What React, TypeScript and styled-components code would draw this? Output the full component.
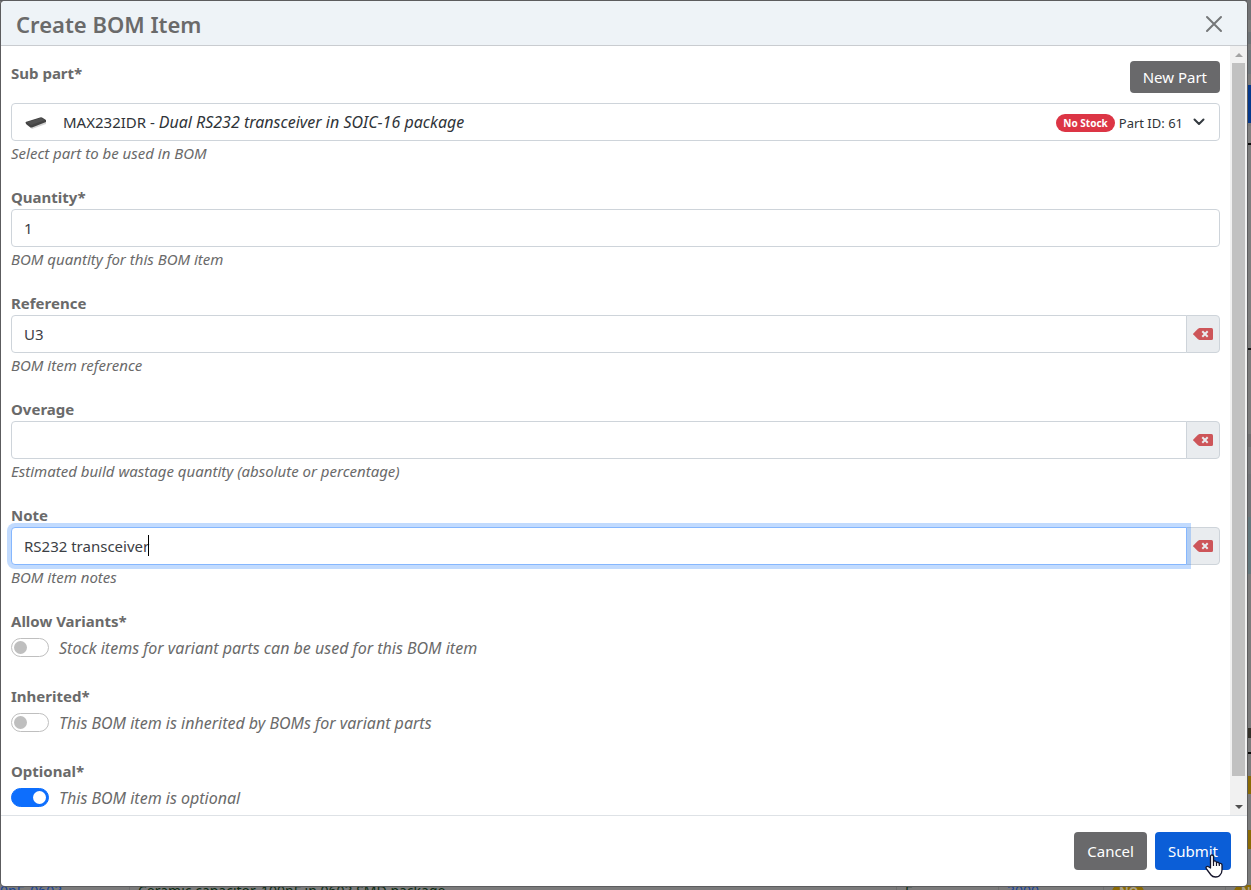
import React, { useState } from "react";
import styled, { createGlobalStyle } from "styled-components";

const GlobalStyle = createGlobalStyle`
  *, *::before, *::after { box-sizing: border-box; }
  body {
    margin: 0;
    font-family: "Noto Sans", "Open Sans", sans-serif;
    font-size: 15px;
    line-height: 24px;
    color: #6a6a6a;
  }
  input, button { font: inherit; }
`;

const Page = styled.div`
  position: relative;
  display: flex;
  flex-direction: column;
  height: 100vh;
  padding: 1px 4px 4px 1px;
  background: #7b7b7b;
  overflow: hidden;
`;

const SideStrip = styled.div`
  position: absolute;
  top: 0;
  right: 0;
  bottom: 0;
  width: 4px;
  display: flex;
  flex-direction: column;
`;

const Slice = styled.div<{ $h: number; $c: string }>`
  flex: 0 0 ${(p) => p.$h}px;
  background: ${(p) => p.$c};
`;

const TopStrip = styled.div`
  position: absolute;
  top: 0;
  left: 0;
  right: 0;
  height: 1px;
  background: #5b5b5e;
`;

const TableRow = styled.div`
  position: absolute;
  left: 0;
  right: 0;
  bottom: 0;
  height: 5px;
  display: flex;
  overflow: hidden;
  font-size: 14px;
  line-height: 12px;
  color: #0c2d12;
  white-space: nowrap;
`;

const Cell = styled.div<{ $w: number; $link?: boolean }>`
  flex: 0 0 ${(p) => p.$w}px;
  padding-left: 8px;
  border-left: 1px solid #6e6e6e;
  color: ${(p) => (p.$link ? "#15429a" : "inherit")};
`;

const LeadCell = styled(Cell)`
  padding-left: 0;
  border-left: 0;
`;

const Tag = styled.span`
  display: block;
  width: 32px;
  padding: 0 7px;
  border-radius: 8px;
  background: #8a6a05;
  color: #a8a08a;
  font-size: 12px;
  line-height: 14px;
  font-weight: 700;
`;

const Dialog = styled.form`
  position: relative;
  flex: 1;
  min-height: 0;
  display: flex;
  flex-direction: column;
  background: #fff;
  border-radius: 4px;
  box-shadow: 0 0 0 1px #5c5c5e;
  overflow: hidden;
`;

const Header = styled.header`
  display: flex;
  align-items: center;
  justify-content: space-between;
  height: 45px;
  padding: 2px 24px 0 15px;
  background: #eef3f7;
  border-bottom: 1px solid #c9ccd0;
`;

const Title = styled.h1`
  margin: 0;
  font-size: 22px;
  line-height: 32px;
  font-weight: 600;
`;

const CloseButton = styled.button`
  display: flex;
  padding: 0;
  border: 0;
  background: none;
  color: #757779;
`;

const Main = styled.div`
  flex: 1;
  min-height: 0;
  display: flex;
`;

const Body = styled.div`
  flex: 1;
  min-width: 0;
  display: flex;
  flex-direction: column;
  gap: 20px;
  padding: 15px 10px 0;
  overflow: auto;
  scrollbar-width: none;
`;

const Scrollbar = styled.div`
  flex: 0 0 17px;
  display: flex;
  flex-direction: column;
  align-items: center;
  background: #f1f1f1;
`;

const ScrollArrow = styled.div`
  height: 17px;
  display: flex;
  align-items: center;
`;

const Thumb = styled.div`
  width: 13px;
  height: 97%;
  background: #c1c1c1;
`;

const Track = styled.div`
  flex: 1;
  min-height: 0;
`;

const Field = styled.div`
  display: flex;
  flex-direction: column;
  flex-shrink: 0;
`;

const FieldHead = styled.div`
  display: flex;
  justify-content: space-between;
  align-items: flex-start;
  margin-bottom: 10px;
`;

const Label = styled.label`
  font-weight: 700;
`;

const Hint = styled.div`
  font-style: italic;
`;

const Group = styled.div`
  position: relative;
  display: flex;
  height: 38px;
`;

const TextInput = styled.input<{ $joined?: boolean; $active?: boolean }>`
  flex: 1;
  min-width: 0;
  padding: 6px 12px;
  border: 1px solid ${(p) => (p.$active ? "#86b7fe" : "#ced4da")};
  border-radius: ${(p) => (p.$joined ? "4px 0 0 4px" : "4px")};
  background: #fff;
  color: #3c4045;
  outline: none;
  position: relative;
  z-index: ${(p) => (p.$active ? 1 : 0)};
  box-shadow: ${(p) => (p.$active ? "0 0 0 4px rgba(13, 110, 253, 0.25)" : "none")};
`;

const Caret = styled.span`
  position: absolute;
  z-index: 2;
  left: 137px;
  top: 8px;
  width: 1px;
  height: 21px;
  background: #000;
`;

const ClearButton = styled.button`
  flex: 0 0 34px;
  display: flex;
  align-items: center;
  justify-content: center;
  margin-left: -1px;
  padding: 0;
  border: 1px solid #ced4da;
  border-radius: 0 4px 4px 0;
  background: #e9ecef;
`;

const PartSelect = styled.button`
  display: flex;
  align-items: center;
  height: 38px;
  padding: 0 14px 0 12px;
  border: 1px solid #ced4da;
  border-radius: 4px;
  background: #fff;
  color: #303439;
  text-align: left;
`;

const PartName = styled.span`
  flex: 1;
  padding-left: 15px;

  i { font-size: 16px; }
`;

const Stock = styled.span`
  display: flex;
  align-items: center;
  padding-top: 2px;
`;

const Badge = styled.span`
  padding: 0 7px;
  border-radius: 9px;
  background: #dc3545;
  color: #fff;
  font-size: 10px;
  line-height: 18px;
  font-weight: 700;
`;

const PartId = styled.span`
  padding: 0 10px 0 4px;
  font-size: 13px;
  line-height: 18px;
`;

const SwitchRow = styled.div`
  display: flex;
  align-items: flex-start;
  gap: 10px;
  font-size: 16px;
  line-height: 31px;
  font-style: italic;
`;

const Switch = styled.input`
  appearance: none;
  width: 38px;
  height: 19px;
  margin: 5px 0 0;
  padding: 2px;
  border: 1px solid #bfbfbf;
  border-radius: 10px;
  background: #fff;
  display: flex;
  &::before {
    content: "";
    width: 13px;
    height: 13px;
    border-radius: 50%;
    background: #bfbfbf;
  }
  &:checked {
    justify-content: flex-end;
    background: #0d6efd;
    border-color: #0d6efd;
  }
  &:checked::before { background: #fff; }
`;

const Footer = styled.footer`
  display: flex;
  justify-content: flex-end;
  gap: 8px;
  padding: 16px;
  border-top: 1px solid #dee2e6;
`;

const Button = styled.button<{ $tone?: "primary"; $small?: boolean }>`
  height: ${(p) => (p.$small ? 32 : 38)}px;
  padding: 0 13px;
  border: 0;
  border-radius: 4px;
  background: ${(p) => (p.$tone ? "#0b5ed7" : "#69696b")};
  color: #fff;
`;

const Pointer = styled.svg`
  position: absolute;
  right: 24px;
  bottom: 8px;
`;

const ClearIcon = () => (
  <svg width="20" height="12" viewBox="0 0 20 12" aria-hidden="true">
    <path d="M6.5 0H18.5A1.5 1.5 0 0 1 20 1.5V10.5A1.5 1.5 0 0 1 18.5 12H6.5L5 11.2L0.3 6.6Q0 6 .3 5.4L5 .8Z" fill="#cd5559" />
    <path d="M9.3 3.3L14.7 8.7M14.7 3.3L9.3 8.7" stroke="#e9ecef" strokeWidth="2" />
  </svg>
);

type TextFieldProps = { id: string; label: string; hint: string; initial: string; clearable?: boolean; active?: boolean };

const TextField = ({ id, label, hint, initial, clearable, active }: TextFieldProps) => {
  const [value, setValue] = useState(initial);
  return (
    <Field>
      <Label htmlFor={id}>{label}</Label>
      <Group>
        <TextInput id={id} value={value} $joined={clearable} $active={active} onChange={(e) => setValue(e.target.value)} />
        {active && <Caret />}
        {clearable && (
          <ClearButton type="button" aria-label={`Clear ${label}`} onClick={() => setValue("")}>
            <ClearIcon />
          </ClearButton>
        )}
      </Group>
      <Hint>{hint}</Hint>
    </Field>
  );
};

const SwitchField = ({ id, label, hint, on }: { id: string; label: string; hint: string; on?: boolean }) => (
  <Field>
    <Label htmlFor={id}>{label}</Label>
    <SwitchRow>
      <Switch id={id} type="checkbox" defaultChecked={on} />
      <span>{hint}</span>
    </SwitchRow>
  </Field>
);

const slices: [number, string][] = [
  [20, "#727275"], [12, "#7b7b7b"], [12, "#6d7276"], [6, "#7b7b7b"], [24, "#6f767b"], [11, "#7b7b7b"],
  [38, "#06398c"], [3, "#7b7b7b"], [17, "#808080"], [2, "#0a0a0a"], [180, "#7d7d7d"], [23, "#7b7b7b"],
  [2, "#161616"], [84, "#7b7b7b"], [13, "#6f6f70"], [27, "#77787a"], [43, "#727477"], [57, "#64787d"],
  [154, "#7b7b7b"], [10, "#33302a"], [14, "#7b7b7b"], [2, "#0a0a0a"], [22, "#7b7b7b"], [18, "#8a6a05"],
  [36, "#7b7b7b"], [19, "#8a6a05"],
];

export default function App() {
  return (
    <>
      <GlobalStyle />
      <Page>
        <TopStrip />
        <SideStrip>
          {slices.map(([h, c], i) => <Slice key={i} $h={h} $c={c} />)}
        </SideStrip>
        <TableRow>
          <LeadCell $w={129} $link>0nF_0603</LeadCell>
          <Cell $w={767}>Ceramic capacitor, 100nF in 0603 SMD package</Cell>
          <Cell $w={102}>F</Cell>
          <Cell $w={105} $link>3000</Cell>
          <Cell $w={122}><Tag>NO</Tag></Cell>
          <Cell $w={122}><Tag>NO</Tag></Cell>
        </TableRow>
        <Dialog onSubmit={(e) => e.preventDefault()}>
          <Header>
            <Title>Create BOM Item</Title>
            <CloseButton type="button" aria-label="Close">
              <svg width="18" height="18" viewBox="0 0 18 18" stroke="currentColor" strokeWidth="2" strokeLinecap="round" aria-hidden="true">
                <path d="M2 2L16 16M16 2L2 16" />
              </svg>
            </CloseButton>
          </Header>
          <Main>
            <Body>
              <Field>
                <FieldHead>
                  <Label htmlFor="sub-part">Sub part*</Label>
                  <Button type="button" $small>New Part</Button>
                </FieldHead>
                <PartSelect id="sub-part" type="button" aria-haspopup="listbox">
                  <svg width="24" height="16" viewBox="0 0 24 16" aria-hidden="true">
                    <path d="M3 11L8 15L22 10V6Z" fill="#d4d4d4" />
                    <path d="M1.500 8L16 3.500Q17.500 3 18.500 3.700L22 6V8L8 13.500L6.500 13.500L2 10Z" fill="#444" />
                    <path d="M3 8.300L17 4L20.500 6.300L7 11Z" fill="#515151" />
                  </svg>
                  <PartName>MAX232IDR - <i>Dual RS232 transceiver in SOIC-16 package</i></PartName>
                  <Stock>
                    <Badge>No Stock</Badge>
                    <PartId>Part ID: 61</PartId>
                  </Stock>
                  <svg width="12" height="8" viewBox="0 0 12 8" fill="none" stroke="#343a40" strokeWidth="2" strokeLinecap="round" strokeLinejoin="round" aria-hidden="true">
                    <path d="M1.5 1.5L6 6L10.500 1.500" />
                  </svg>
                </PartSelect>
                <Hint>Select part to be used in BOM</Hint>
              </Field>
              <TextField id="quantity" label="Quantity*" hint="BOM quantity for this BOM item" initial="1" />
              <TextField id="reference" label="Reference" hint="BOM item reference" initial="U3" clearable />
              <TextField id="overage" label="Overage" hint="Estimated build wastage quantity (absolute or percentage)" initial="" clearable />
              <TextField id="note" label="Note" hint="BOM item notes" initial="RS232 transceiver" clearable active />
              <SwitchField id="variants" label="Allow Variants*" hint="Stock items for variant parts can be used for this BOM item" />
              <SwitchField id="inherited" label="Inherited*" hint="This BOM item is inherited by BOMs for variant parts" />
              <SwitchField id="optional" label="Optional*" hint="This BOM item is optional" on />
            </Body>
            <Scrollbar>
              <ScrollArrow>
                <svg width="8" height="4" viewBox="0 0 8 4" aria-hidden="true"><path d="M0 4L4 0L8 4Z" fill="#a3a3a3" /></svg>
              </ScrollArrow>
              <Track><Thumb /></Track>
              <ScrollArrow>
                <svg width="8" height="4" viewBox="0 0 8 4" aria-hidden="true"><path d="M0 0L4 4L8 0Z" fill="#505050" /></svg>
              </ScrollArrow>
            </Scrollbar>
          </Main>
          <Footer>
            <Button type="button">Cancel</Button>
            <Button type="submit" $tone="primary">Submit</Button>
          </Footer>
          <Pointer width="18" height="24" viewBox="0 0 18 24" aria-hidden="true">
            <path
              d="M5.500 14V2.500Q5.500 1 7 1T8.500 2.500V8Q9 6.500 10.300 7T11.500 9Q12 7.800 13.200 8.300T14.300 10Q15 9 16 9.500T17 11V16Q17 19 15 21Q14 23 10.500 23Q7.500 23 6 21L1.500 15Q.5 13.500 1.500 12.700T4 13Z"
              fill="#fff" stroke="#14142b" strokeWidth="1.300" strokeLinejoin="round"
            />
            <path d="M8.500 8V12M11.500 9V12M14.300 10V12" stroke="#14142b" strokeWidth="1.200" />
          </Pointer>
        </Dialog>
      </Page>
    </>
  );
}
